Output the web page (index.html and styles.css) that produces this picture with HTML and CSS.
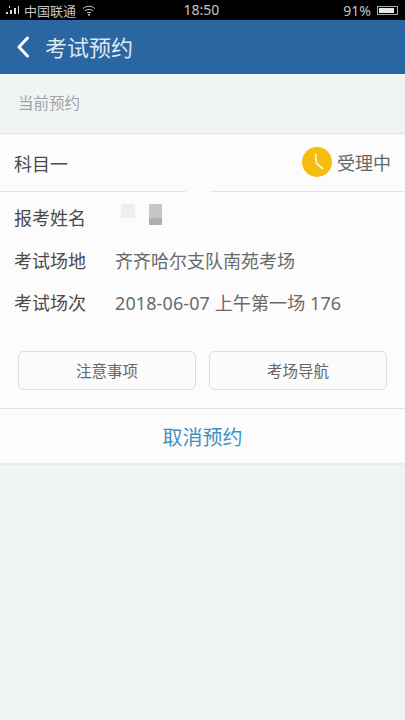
FILE: index.html
```html
<!DOCTYPE html>
<html lang="zh">
<head>
<meta charset="utf-8">
<title>考试预约</title>
<link rel="stylesheet" href="styles.css">
</head>
<body>
<div class="status">
  <div class="status-left">
    <svg class="signal" width="16" height="10" viewBox="0 0 16 10"><path d="M1 3h1M1 5h1M4 1h1v2H4zM1 7h2v2H1zM5 5h2v4H5zM9 3h2v6H9zM13 1h1v8h-1z" fill="#ddd"/></svg>
    <span>中国联通</span>
    <svg class="wifi" width="14" height="11" viewBox="0 0 14 11" fill="none" stroke="#ccc" stroke-width="1"><path d="M1 3.500C4.500 .5 9.500 .5 13 3.500M3 5.800C5.300 4 8.700 4 11 5.800M5 8c1.200-.8 2.800-.8 4 0"/><circle cx="7" cy="9.800" r=".6" fill="#ccc"/></svg>
  </div>
  <div class="status-time">18:50</div>
  <div class="status-right">
    <span>91%</span>
    <span class="battery"><span class="battery-fill"></span></span>
  </div>
</div>
<header class="nav">
  <svg class="back" width="14" height="22" viewBox="0 0 14 22" fill="none" stroke="#fff" stroke-width="3" stroke-linecap="round" stroke-linejoin="round"><path d="M11.500 2 3 11l8.500 9"/></svg>
  <h1>考试预约</h1>
</header>
<div class="section-label">当前预约</div>
<main class="card">
  <div class="card-head">
    <span class="subject">科目一</span>
    <div class="state">
      <svg width="30" height="30" viewBox="0 0 30 30"><circle cx="15" cy="15" r="15" fill="#f6bd0f"/><path d="M13.500 6.500 14.500 16.500 21 22" fill="none" stroke="#fdf3cf" stroke-width="1.800"/></svg>
      <span>受理中</span>
    </div>
    <span class="notch"></span>
  </div>
  <dl class="info">
    <div class="row"><dt>报考姓名</dt><dd class="masked"><span class="blur-a"></span><span class="blur-b"></span></dd></div>
    <div class="row"><dt>考试场地</dt><dd>齐齐哈尔支队南苑考场</dd></div>
    <div class="row"><dt>考试场次</dt><dd class="session">2018-06-07 上午第一场 176</dd></div>
  </dl>
  <div class="actions">
    <button class="btn">注意事项</button>
    <button class="btn">考场导航</button>
  </div>
  <div class="cancel">取消预约</div>
</main>
</body>
</html>
```
FILE: styles.css
```css
* { box-sizing: border-box; }
html, body { margin: 0; padding: 0; }
body {
  width: 405px;
  height: 720px;
  overflow: hidden;
  background: #eff5f5;
  font-family: "Noto Sans", "Noto Sans CJK SC", sans-serif;
  color: #555;
}
.status {
  height: 20px;
  background: #000;
  color: #c4c4c4;
  display: grid;
  grid-template-columns: 1fr auto 1fr;
  align-items: center;
  font-size: 13px;
  padding: 0 7px 0 5px;
}
.status-left { display: flex; align-items: center; gap: 3px; }
.wifi { margin-left: 3px; }
.status-time { font-size: 14px; line-height: 20px; }
.status-right { display: flex; justify-content: flex-end; align-items: center; gap: 6px; font-size: 14px; }
.battery {
  width: 21px;
  height: 9px;
  border: 1px solid #aaa;
  padding: 1px;
  display: block;
}
.battery-fill { display: block; width: 91%; height: 100%; background: #e8e8e8; }
.nav {
  height: 54px;
  background: #2a66a1;
  display: flex;
  align-items: center;
  padding-left: 16px;
  gap: 15px;
}
.nav h1 {
  margin: 0;
  font-size: 22px;
  font-weight: 400;
  line-height: 30px;
  color: #dfe9f3;
}
.section-label {
  height: 59px;
  padding: 19px 0 0 18px;
  font-size: 15.500px;
  line-height: 20px;
  color: #a3a3a3;
}
.card {
  background: #fcfcfc;
  border-top: 1px solid #dbe6e4;
  border-bottom: 2px solid #e6ecec;
}
.card-head {
  position: relative;
  height: 58px;
  border-bottom: 1px solid #e0e6e5;
  display: flex;
  justify-content: space-between;
  align-items: center;
  padding: 0 14px;
}
.subject { font-size: 18px; color: #4a4a4a; }
.state { display: flex; align-items: center; gap: 5px; font-size: 18px; color: #666; margin-top: -2px; }
.notch {
  position: absolute;
  left: 186px;
  bottom: -1px;
  width: 24px;
  height: 1px;
  background: #fcfcfc;
}
.info { margin: 5px 0 0; padding: 0 14px; }
.row { display: flex; align-items: center; height: 42.500px; }
.row dt { width: 101px; font-size: 18px; color: #4a4a4a; line-height: 26px; }
.row dd { margin: 0; font-size: 18px; color: #6a6a6a; line-height: 26px; }
.row .session { letter-spacing: 0.100px; }
.masked { display: flex; align-items: flex-start; gap: 14px; padding-left: 6px; height: 32px; padding-top: 2px; }
.blur-a { width: 14px; height: 14px; background: #eeeeee; }
.blur-b { width: 13px; height: 21px; background: linear-gradient(#c6c6c6 65%, #aeaeae 65%); }
.actions {
  display: grid;
  grid-template-columns: 178px 178px;
  justify-content: space-between;
  padding: 0 18px;
  margin-top: 26px;
}
.btn {
  height: 39px;
  background: #fbfbfb;
  border: 1px solid #dcdcdc;
  border-radius: 6px;
  font: inherit;
  font-size: 15.500px;
  color: #666;
  padding: 0;
}
.cancel {
  margin-top: 18px;
  border-top: 1px solid #dfe3e3;
  height: 55px;
  padding-top: 2px;
  display: flex;
  align-items: center;
  justify-content: center;
  font-size: 20px;
  color: #3d93bd;
}
```
